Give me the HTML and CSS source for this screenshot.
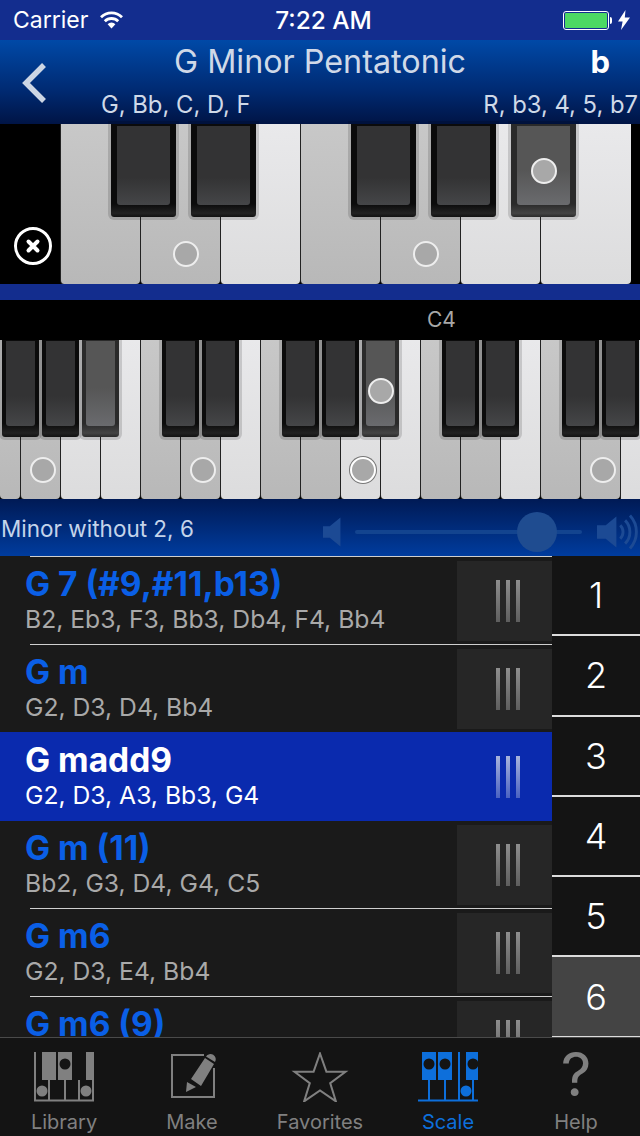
FILE: index.html
```html
<!DOCTYPE html>
<html lang="en">
<head>
<meta charset="utf-8">
<title>G Minor Pentatonic</title>
<link rel="stylesheet" href="styles.css">
</head>
<body>
<div class="app">
  <div class="status">
    <div class="status-left">
      <span>Carrier</span>
      <svg class="wifi" width="25" height="18" viewBox="0 0 25 18"><path class="fill-white" d="M12.500 17.500 8.600 13.200a5.600 5.600 0 0 1 7.800 0z"/><path class="wifi-arc" d="M5.800 10.200a9.600 9.600 0 0 1 13.400 0M2 6.200a15 15 0 0 1 21 0"/></svg>
    </div>
    <div class="status-time">7:22 AM</div>
    <div class="status-right">
      <div class="battery"><div class="battery-fill"></div></div>
      <div class="battery-nub"></div>
      <svg class="bolt" width="12" height="20" viewBox="0 0 12 20"><path class="fill-white" d="M7.500 0 0 11.500h4.600L3 20l9-12.500H6.800z"/></svg>
    </div>
  </div>

  <header class="nav">
    <svg class="back" width="26" height="42" viewBox="0 0 26 42"><path d="M23 3 5 21l18 18"/></svg>
    <div class="nav-title">G Minor Pentatonic</div>
    <div class="nav-flat">b</div>
    <div class="nav-sub">
      <span class="nav-notes">G, Bb, C, D, F</span>
      <span>R, b3, 4, 5, b7</span>
    </div>
  </header>

  <section class="kb-top">
    <div class="kb-side">
      <svg class="close" width="40" height="40" viewBox="0 0 40 40"><circle cx="20" cy="20" r="17.500"/><path d="M15.500 15.500l9 9m0-9-9 9"/></svg>
    </div>
    <div class="keys keys-big">
      <div class="white gray"></div>
      <div class="white gray"><span class="dot"></span></div>
      <div class="white"></div>
      <div class="white gray"></div>
      <div class="white gray"><span class="dot"></span></div>
      <div class="white"></div>
      <div class="white wide"></div>
      <div class="blacks">
        <div class="slot"><div class="black"><div class="face"></div></div></div>
        <div class="slot"><div class="black"><div class="face"></div></div></div>
        <div class="slot"></div>
        <div class="slot"><div class="black"><div class="face"></div></div></div>
        <div class="slot"><div class="black"><div class="face"></div></div></div>
        <div class="slot"><div class="black on"><div class="face"><span class="dot"></span></div></div></div>
      </div>
    </div>
  </section>

  <div class="band"></div>

  <div class="octave"><span>C4</span></div>

  <section class="keys keys-small">
    <div class="white gray first"></div>
    <div class="white gray"><span class="dot"></span></div>
    <div class="white"></div>
    <div class="white"></div>
    <div class="white gray"></div>
    <div class="white gray"><span class="dot"></span></div>
    <div class="white"></div>
    <div class="white gray"></div>
    <div class="white gray"></div>
    <div class="white"><span class="dot dot-ring"></span></div>
    <div class="white"></div>
    <div class="white gray"></div>
    <div class="white gray"></div>
    <div class="white"></div>
    <div class="white gray"></div>
    <div class="white gray"><span class="dot"></span></div>
    <div class="white last"></div>
    <div class="blacks">
      <div class="slot"><div class="black"><div class="face"></div></div></div>
      <div class="slot"><div class="black"><div class="face"></div></div></div>
      <div class="slot"><div class="black on"><div class="face"></div></div></div>
      <div class="slot"></div>
      <div class="slot"><div class="black"><div class="face"></div></div></div>
      <div class="slot"><div class="black"><div class="face"></div></div></div>
      <div class="slot"></div>
      <div class="slot"><div class="black"><div class="face"></div></div></div>
      <div class="slot"><div class="black"><div class="face"></div></div></div>
      <div class="slot"><div class="black on"><div class="face"><span class="dot"></span></div></div></div>
      <div class="slot"></div>
      <div class="slot"><div class="black"><div class="face"></div></div></div>
      <div class="slot"><div class="black"><div class="face"></div></div></div>
      <div class="slot"></div>
      <div class="slot"><div class="black"><div class="face"></div></div></div>
      <div class="slot"><div class="black"><div class="face"></div></div></div>
    </div>
  </section>

  <div class="volume-bar">
    <div class="scale-name">Minor without 2, 6</div>
    <div class="volume">
      <svg width="20" height="30" viewBox="0 0 20 30"><path class="vol-fill" d="M18 0v30L7 21H0V9h7z"/></svg>
      <div class="track"><div class="thumb"></div></div>
      <svg width="44" height="40" viewBox="0 0 44 40"><path class="vol-fill" d="M20 4v32L9 27H0V13h9z"/><path class="vol-wave" d="M24 13a10 10 0 0 1 0 14M29 8a17 17 0 0 1 0 24M34 3a25 25 0 0 1 0 34"/></svg>
    </div>
  </div>

  <main class="content">
    <div class="list">
      <div class="sep"></div>
      <div class="row"><div class="row-text"><div class="row-name">G 7 (#9,#11,b13)</div><div class="row-notes">B2, Eb3, F3, Bb3, Db4, F4, Bb4</div></div><div class="handle"><i></i><i></i><i></i></div></div>
      <div class="sep"></div>
      <div class="row"><div class="row-text"><div class="row-name">G m</div><div class="row-notes">G2, D3, D4, Bb4</div></div><div class="handle"><i></i><i></i><i></i></div></div>
      <div class="sep sep-sel"></div>
      <div class="row row-sel"><div class="row-text"><div class="row-name">G madd9</div><div class="row-notes">G2, D3, A3, Bb3, G4</div></div><div class="handle"><i></i><i></i><i></i></div></div>
      <div class="sep sep-sel"></div>
      <div class="row"><div class="row-text"><div class="row-name">G m (11)</div><div class="row-notes">Bb2, G3, D4, G4, C5</div></div><div class="handle"><i></i><i></i><i></i></div></div>
      <div class="sep"></div>
      <div class="row"><div class="row-text"><div class="row-name">G m6</div><div class="row-notes">G2, D3, E4, Bb4</div></div><div class="handle"><i></i><i></i><i></i></div></div>
      <div class="sep"></div>
      <div class="row"><div class="row-text"><div class="row-name">G m6 (9)</div></div><div class="handle"><i></i><i></i><i></i></div></div>
    </div>
    <div class="numbers">
      <div class="num">1</div>
      <div class="num">2</div>
      <div class="num">3</div>
      <div class="num">4</div>
      <div class="num">5</div>
      <div class="num num-on">6</div>
    </div>
  </main>

  <nav class="tabs">
    <div class="tab">
      <svg class="tab-icon" width="60" height="50" viewBox="0 0 60 50">
        <path class="tl" d="M1 0v49M15 28v21M31 28v21M45 28v21M59 0v49M0 48.500h60"/>
        <path class="tf" d="M8 0h14v28H8zM24 0h14v28H24zM52 0h8v28h-8z"/>
        <circle class="tc" cx="31" cy="12" r="5.500"/>
        <circle class="tf" cx="8" cy="39" r="5.500"/>
        <circle class="tf" cx="52" cy="39" r="5.500"/>
      </svg>
      <div class="tab-label">Library</div>
    </div>
    <div class="tab">
      <svg class="tab-icon" width="60" height="50" viewBox="0 0 60 50">
        <path class="tl" d="M42 3H10v42h42V16"/>
        <path class="tf" d="M29 27 39 34 52 12 43 6zM25 30 34 35 24 40zM44 4.500 53 10a5.200 5.200 0 0 0-9-5.500z"/>
      </svg>
      <div class="tab-label">Make</div>
    </div>
    <div class="tab">
      <svg class="tab-icon" width="60" height="50" viewBox="0 0 60 50">
        <path class="tl" d="M30 1.500l6.400 18.200h19.100L40.200 31.100l5.700 18.300L30 38.400 14.100 49.400l5.700-18.300L4.500 19.700h19.100z"/>
      </svg>
      <div class="tab-label">Favorites</div>
    </div>
    <div class="tab tab-on">
      <svg class="tab-icon" width="60" height="50" viewBox="0 0 60 50">
        <path class="tl" d="M11 28v21M27 28v21M41 0v49M55 28v21M0 48.500h60"/>
        <path class="tf" d="M4 0h14v28H4zM20 0h14v28H20zM48 0h12v28H48z"/>
        <circle class="tc" cx="11" cy="12" r="5.500"/>
        <circle class="tc" cx="27" cy="12" r="5.500"/>
        <circle class="tc" cx="55" cy="12" r="5.500"/>
        <circle class="tf" cx="48" cy="39" r="5.500"/>
      </svg>
      <div class="tab-label">Scale</div>
    </div>
    <div class="tab">
      <div class="tab-help">?</div>
      <div class="tab-label">Help</div>
    </div>
  </nav>
</div>
</body>
</html>
```
FILE: styles.css
```css
* { box-sizing: border-box; }
html, body { margin: 0; padding: 0; background: #000; }
body { font-family: Inter, Roboto, "Liberation Sans", sans-serif; }
.app { width: 640px; height: 1136px; display: flex; flex-direction: column; overflow: hidden; }

/* status bar */
.status { height: 40px; flex: none; background: #132d8e; color: #fff; display: flex; align-items: center; justify-content: space-between; padding: 0 10px 0 13px; position: relative; font-size: 23px; }
.status-left { display: flex; align-items: center; gap: 11px; }
.status-time { position: absolute; left: 7px; right: 0; text-align: center; font-weight: 500; font-size: 24.400px; }
.status-right { display: flex; align-items: center; }
.battery { width: 46px; height: 19px; border: 1.500px solid #fff; border-radius: 3px; padding: 1px; }
.battery-fill { height: 100%; background: #4cd964; border-radius: 1px; }
.battery-nub { width: 2px; height: 7px; background: #fff; margin: 0 6px 0 1px; border-radius: 0 2px 2px 0; }
.fill-white { fill: #fff; }
.wifi-arc { fill: none; stroke: #fff; stroke-width: 2.800px; }

/* nav */
.nav { height: 84px; flex: none; position: relative; color: #cfd9e8; background: linear-gradient(#0049a7, #002a72 60%, #001445); }
.back { position: absolute; left: 21px; top: 22px; }
.back path { fill: none; stroke: #ccd6e4; stroke-width: 5.500px; }
.nav-title { font-size: 32.300px; line-height: 40px; padding-top: 2px; text-align: center; height: 46px; }
.nav-flat { position: absolute; right: 30px; top: 2px; font-size: 31px; line-height: 40px; font-weight: 700; color: #fff; }
.nav-sub { display: flex; justify-content: space-between; padding: 6px 2px 0 101px; font-size: 23.800px; line-height: 26px; }

/* keyboards */
.kb-top { height: 160px; flex: none; display: flex; background: #000; }
.kb-side { width: 60px; flex: none; display: flex; align-items: flex-end; padding: 0 0 18px 13px; }
.close circle { fill: none; stroke: #fff; stroke-width: 3px; }
.close path { fill: none; stroke: #fff; stroke-width: 4px; stroke-linecap: round; }

.keys { display: flex; position: relative; }
.keys-big { width: 571px; }
.keys-small { height: 159px; flex: none; width: 640px; background: #000; }
.white { background: linear-gradient(#e9e9eb, #dcdcdd); border-left: 1px solid #222; border-radius: 0 0 4px 4px; display: flex; align-items: flex-end; justify-content: center; flex: none; }
.white.gray { background: linear-gradient(#c8c8c8, #b8b8b8); }
.keys-big .white { width: 80px; padding: 0 0 17px 11px; }
.keys-big .wide { width: 91px; }
.keys-small .white { width: 40px; padding: 0 0 16px 5px; }
.keys-small .first, .keys-small .last { width: 20px; padding: 0; }
.keys-small .first { border-left: 0; }
.keys-small .last { border-radius: 0; }
.dot { display: block; width: 26px; height: 26px; border-radius: 50%; background: #a8a8a8; border: 2px solid #eeeeee; flex: none; }
.dot-ring { box-shadow: 0 0 0 1px #777; border-color: #fff; }

.blacks { position: absolute; top: 0; left: 0; right: 0; display: flex; }
.keys-big .blacks { padding-left: 51px; }
.keys-big .slot { width: 80px; flex: none; }
.keys-big .black { width: 65px; height: 93px; padding: 2px 6px 12px; }
.keys-big .face { padding-top: 10px; }
.keys-small .blacks { padding-left: 2px; }
.keys-small .slot { width: 40px; flex: none; }
.keys-small .black { width: 37px; height: 97px; padding: 1px 4px 11px; }
.keys-small .face { padding-top: 14px; }
.black { background: linear-gradient(#0b0b0b 86%, #222 96%, #111); border-radius: 0 0 3px 3px; box-shadow: 0 0 0 3px rgba(0, 0, 0, .14); }
.face { height: 100%; background: linear-gradient(#333334 65%, #454648); border-radius: 0 0 3px 3px; display: flex; align-items: center; justify-content: center; }
.black.on { background: linear-gradient(#2a2a2a 86%, #444 96%, #2a2a2a); }
.black.on .face { background: linear-gradient(#565656 55%, #6a6b6e); }

.band { height: 16px; flex: none; background: #132d8e; }
.octave { height: 40px; flex: none; background: #000; color: #a8a8a8; font-size: 21px; line-height: 40px; padding-left: 427px; }

/* volume bar */
.volume-bar { height: 57px; flex: none; display: flex; align-items: center; justify-content: space-between; background: linear-gradient(#001a55, #003c9e); color: #c4d4ea; }
.scale-name { font-size: 22.500px; padding: 2px 0 0 1px; }
.volume { display: flex; align-items: center; width: 317px; margin-top: 8px; }
.vol-fill { fill: #1c4a94; }
.vol-wave { fill: none; stroke: #1c4a94; stroke-width: 3px; }
.track { flex: none; width: 227px; height: 4px; margin: 0 15px 0 13px; background: #13448f; border-radius: 2px; position: relative; }
.thumb { position: absolute; left: 162px; top: -18px; width: 40px; height: 40px; border-radius: 50%; background: #1f4c90; }

/* list */
.content { flex: 1; min-height: 0; display: flex; overflow: hidden; background: #1a1a1a; }
.list { width: 552px; flex: none; }
.sep { height: 1px; margin-left: 30px; background: #cfcfcf; }
.sep-sel { margin-left: 0; background: #0a2aae; }
.row { height: 87px; display: flex; justify-content: space-between; padding: 4px 0 3px; background: #1a1a1a; }
.row-sel { background: #0a2aae; }
.row-text { padding: 5px 0 0 25px; }
.row-name { font-size: 33.500px; line-height: 38px; font-weight: 700; color: #0a5fe6; white-space: nowrap; margin-top: -1px; }
.row-notes { font-size: 24.700px; line-height: 28px; color: #a9a9a9; margin-top: 2px; white-space: nowrap; }
.row-sel .row-name, .row-sel .row-notes { color: #fff; }
.handle { width: 95px; flex: none; background: #262626; display: flex; align-items: center; justify-content: center; gap: 6px; padding-left: 7px; }
.row-sel .handle { background: transparent; }
.handle i { display: block; width: 4px; height: 42px; background: linear-gradient(#8e8e8e, #5e5e5e); }
.row-sel .handle i { background: linear-gradient(#a9b4dc, #4a62c2); }

.numbers { width: 88px; flex: none; background: #141414; }
.num { height: 80.300px; border-bottom: 2px solid #dcdcdc; color: #fff; font-size: 36px; font-weight: 300; display: flex; align-items: center; justify-content: center; }
.num-on { background: #444; }

/* tabs */
.tabs { height: 99px; flex: none; display: flex; background: #141414; border-top: 1px solid #4a4a4a; padding-top: 14px; }
.tab { width: 128px; flex: none; display: flex; flex-direction: column; align-items: center; color: #808080; }
.tab-on { color: #0d6fdb; }
.tab-icon { display: block; height: 50px; flex: none; }
.tl { fill: none; stroke: currentColor; stroke-width: 2px; }
.tf { fill: currentColor; }
.tc { fill: #141414; }
.tab-help { height: 50px; font-size: 60px; line-height: 44px; }
.tab-label { font-size: 20px; line-height: 24px; margin-top: 8px; }
```
